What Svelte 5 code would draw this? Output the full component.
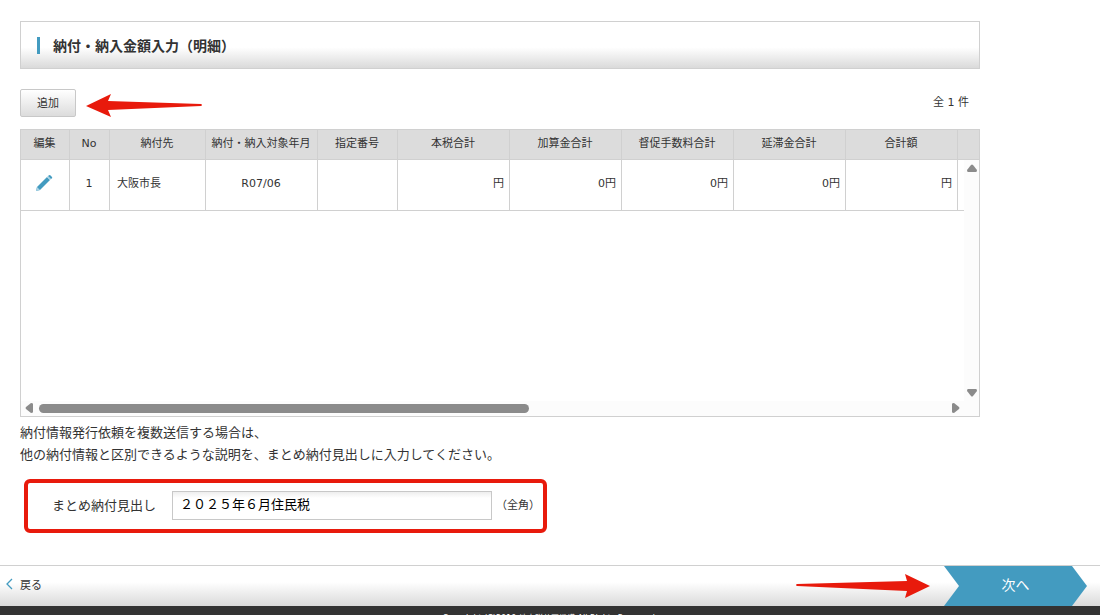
<script lang="ts">
    const columns = [
        { label: '編集', width: 49 },
        { label: 'No', width: 40 },
        { label: '納付先', width: 96 },
        { label: '納付・納入対象年月', width: 112 },
        { label: '指定番号', width: 80 },
        { label: '本税合計', width: 112 },
        { label: '加算金合計', width: 112 },
        { label: '督促手数料合計', width: 112 },
        { label: '延滞金合計', width: 112 },
        { label: '合計額', width: 112 }
    ];

    const rows = [
        {
            no: 1,
            payee: '大阪市長',
            month: 'R07/06',
            number: '',
            amounts: ['円', '0円', '0円', '0円', '円']
        }
    ];

    let heading = $state('２０２５年６月住民税');
</script>

<div class="page">
    <main>
        <div class="title-box">
            <h1>納付・納入金額入力（明細）</h1>
        </div>

        <div class="toolbar">
            <button type="button" class="add-button">追加</button>
            <svg class="arrow" width="116" height="28" viewBox="0 0 116 28" aria-hidden="true">
                <path d="M0 17 L25 5 L22 12 L115 15 Q117 16 115 17 L22 21 L25 28 Z" fill="#e81a0c" />
            </svg>
            <span class="count">全 {rows.length} 件</span>
        </div>

        <div class="grid">
            <table>
                <colgroup>
                    {#each columns as column}
                        <col style="width: {column.width}px" />
                    {/each}
                    <col />
                </colgroup>
                <thead>
                    <tr>
                        {#each columns as column}
                            <th scope="col">{column.label}</th>
                        {/each}
                        <td class="filler"></td>
                    </tr>
                </thead>
                <tbody>
                    {#each rows as row}
                        <tr>
                            <td class="center">
                                <button type="button" class="edit-button" aria-label="編集">
                                    <svg width="17" height="17" viewBox="0 0 17 17">
                                        <path d="M0 16 L1 12 L11 2 L14 5 L4 15 Z" fill="#439bc0" />
                                        <path d="M11 2 L12 1 L15 4 L14 5 Z" fill="#a9d3e5" />
                                        <path d="M12 1 Q13 0 14 0 L16 2 Q17 3 15 4 Z" fill="#439bc0" />
                                        <path d="M0 16 L1 12 L4 15 Z" fill="#a9d3e5" />
                                    </svg>
                                </button>
                            </td>
                            <td class="center">{row.no}</td>
                            <td class="payee">{row.payee}</td>
                            <td class="center">{row.month}</td>
                            <td class="center">{row.number}</td>
                            {#each row.amounts as amount}
                                <td class="amount">{amount}</td>
                            {/each}
                            <td></td>
                        </tr>
                    {/each}
                </tbody>
            </table>

            <div class="scroll-y" aria-hidden="true">
                <svg width="10" height="8" viewBox="0 0 10 8"><path d="M4 1 Q5 0 6 1 L10 6 Q10 8 9 8 H1 Q0 8 0 6 Z" /></svg>
                <svg width="10" height="8" viewBox="0 0 10 8"><path d="M4 7 Q5 8 6 7 L10 2 Q10 0 9 0 H1 Q0 0 0 2 Z" /></svg>
            </div>
            <div class="scroll-x" aria-hidden="true">
                <svg width="8" height="10" viewBox="0 0 8 10"><path d="M1 4 Q0 5 1 6 L6 10 Q8 10 8 9 V1 Q8 0 6 0 Z" /></svg>
                <div class="track"><div class="thumb"></div></div>
                <svg width="8" height="10" viewBox="0 0 8 10"><path d="M7 4 Q8 5 7 6 L2 10 Q0 10 0 9 V1 Q0 0 2 0 Z" /></svg>
            </div>
        </div>

        <p class="note">
            納付情報発行依頼を複数送信する場合は、<br />
            他の納付情報と区別できるような説明を、まとめ納付見出しに入力してください。
        </p>

        <div class="heading-field">
            <label for="heading">まとめ納付見出し</label>
            <input id="heading" type="text" bind:value={heading} />
            <span>（全角）</span>
        </div>
    </main>

    <nav>
        <a class="back" href="#back">
            <svg width="7" height="12" viewBox="0 0 7 12" aria-hidden="true">
                <path d="M6 1 L1 6 L6 11" fill="none" stroke="#439bc0" stroke-width="1.3" />
            </svg>
            戻る
        </a>
        <svg class="arrow" width="134" height="26" viewBox="0 0 134 26" aria-hidden="true">
            <path d="M134 13 L109 1 L111 8 L1 11 Q-1 12 1 13 L111 18 L109 25 Z" fill="#e81a0c" />
        </svg>
        <button type="button" class="next">次へ</button>
    </nav>

    <footer>Copyright (C)2019 地方税共同機構 All Rights Reserved.</footer>
</div>

<style>
    :global(body) {
        margin: 0;
        overflow: hidden;
    }

    .page {
        font-family: 'DejaVu Sans', 'Noto Sans CJK JP', sans-serif;
        font-size: 11px;
        color: #333;
        background: #fff;
    }

    button,
    input {
        font-family: inherit;
        box-sizing: border-box;
    }

    main {
        max-width: 960px;
        padding: 21px 20px 32px;
    }

    .title-box {
        display: flex;
        align-items: center;
        box-sizing: border-box;
        height: 48px;
        padding: 0 16px;
        border: 1px solid #d0d0d0;
        background: linear-gradient(#fff 55%, #dadada);
    }

    h1 {
        margin: 0;
        padding: 2px 0 0 13px;
        border-left: 3px solid #439bc0;
        font-size: 14px;
        line-height: 15px;
    }

    .toolbar {
        display: flex;
        align-items: center;
        gap: 10px;
        margin: 20px 0 12px;
    }

    .add-button {
        width: 56px;
        height: 28px;
        padding: 0 0 2px;
        border: 1px solid #c8c8c8;
        border-radius: 2px;
        background: linear-gradient(#fff, #dcdcdc);
        font-size: 11px;
        color: #333;
    }

    .arrow {
        flex: none;
    }

    .count {
        margin-left: auto;
        padding: 0 11px 4px 0;
    }

    .grid {
        position: relative;
        box-sizing: border-box;
        height: 288px;
        border: 1px solid #d0d0d0;
        overflow: hidden;
    }

    table {
        width: 100%;
        table-layout: fixed;
        border-collapse: separate;
        border-spacing: 0;
        line-height: 16px;
    }

    th,
    td {
        box-sizing: border-box;
        padding: 0 0 3px;
        border-right: 1px solid #d0d0d0;
        border-bottom: 1px solid #d0d0d0;
    }

    th:last-child,
    td:last-child {
        border-right: none;
    }

    th {
        height: 30px;
        padding: 0 1px 2px 0;
        font-weight: normal;
        white-space: nowrap;
        background: #dcdcdc;
    }

    .filler {
        background: #dcdcdc;
    }

    tbody td {
        height: 51px;
    }

    .center {
        padding-right: 1px;
        text-align: center;
    }

    .payee {
        padding-left: 7px;
    }

    .amount {
        padding-right: 5px;
        text-align: right;
    }

    .edit-button {
        display: block;
        width: 17px;
        height: 17px;
        margin: 0 auto;
        padding: 0;
        border: none;
        background: none;
    }

    .edit-button svg {
        display: block;
    }

    .scroll-y,
    .scroll-x {
        position: absolute;
        display: flex;
        justify-content: space-between;
        align-items: center;
        box-sizing: border-box;
        background: #fcfcfc;
        fill: #8b8b8b;
    }

    .scroll-y {
        top: 30px;
        right: 0;
        bottom: 15px;
        flex-direction: column;
        width: 15px;
        padding: 4px 0 4px;
    }

    .scroll-x {
        left: 0;
        right: 0;
        bottom: 0;
        gap: 6px;
        height: 15px;
        padding: 0 19px 1px 4px;
    }

    .track {
        flex: 1;
    }

    .thumb {
        width: 54%;
        height: 9px;
        border-radius: 5px;
        background: #8b8b8b;
    }

    .note {
        margin: 5px 0 13px;
        font-size: 13px;
        line-height: 22px;
    }

    .heading-field {
        display: flex;
        align-items: center;
        box-sizing: border-box;
        width: fit-content;
        height: 54px;
        margin-left: 4px;
        padding: 0 3px 2px 24px;
        border: 4px solid #e81a0c;
        border-radius: 6px;
    }

    .heading-field label {
        width: 120px;
        padding-bottom: 2px;
        font-size: 13px;
    }

    .heading-field span {
        padding-bottom: 2px;
    }

    .heading-field input {
        width: 320px;
        height: 29px;
        margin-right: 4px;
        padding: 0 7px 4px;
        border: 1px solid #c8c8c8;
        background: linear-gradient(#eee, #fff 6px);
        font-size: 13px;
        color: #000;
    }

    nav {
        display: flex;
        align-items: center;
        height: 40px;
        padding: 0 13px 0 6px;
        border-top: 1px solid #d0d0d0;
        background: linear-gradient(#fff 40%, #dadada);
    }

    .back {
        display: flex;
        align-items: center;
        gap: 7px;
        margin-right: auto;
        padding-bottom: 4px;
        color: #333;
        text-decoration: none;
    }

    .next {
        width: 143px;
        height: 40px;
        margin-left: 14px;
        padding: 0 0 4px;
        border: none;
        background: #439bc0;
        clip-path: polygon(0 0, 128px 0, 100% 50%, 128px 100%, 0 100%, 15px 50%);
        font-size: 14px;
        color: #fff;
    }

    footer {
        height: 40px;
        padding-top: 7px;
        background: #333;
        font-size: 8px;
        line-height: 12px;
        text-align: center;
        color: #fff;
    }
</style>
